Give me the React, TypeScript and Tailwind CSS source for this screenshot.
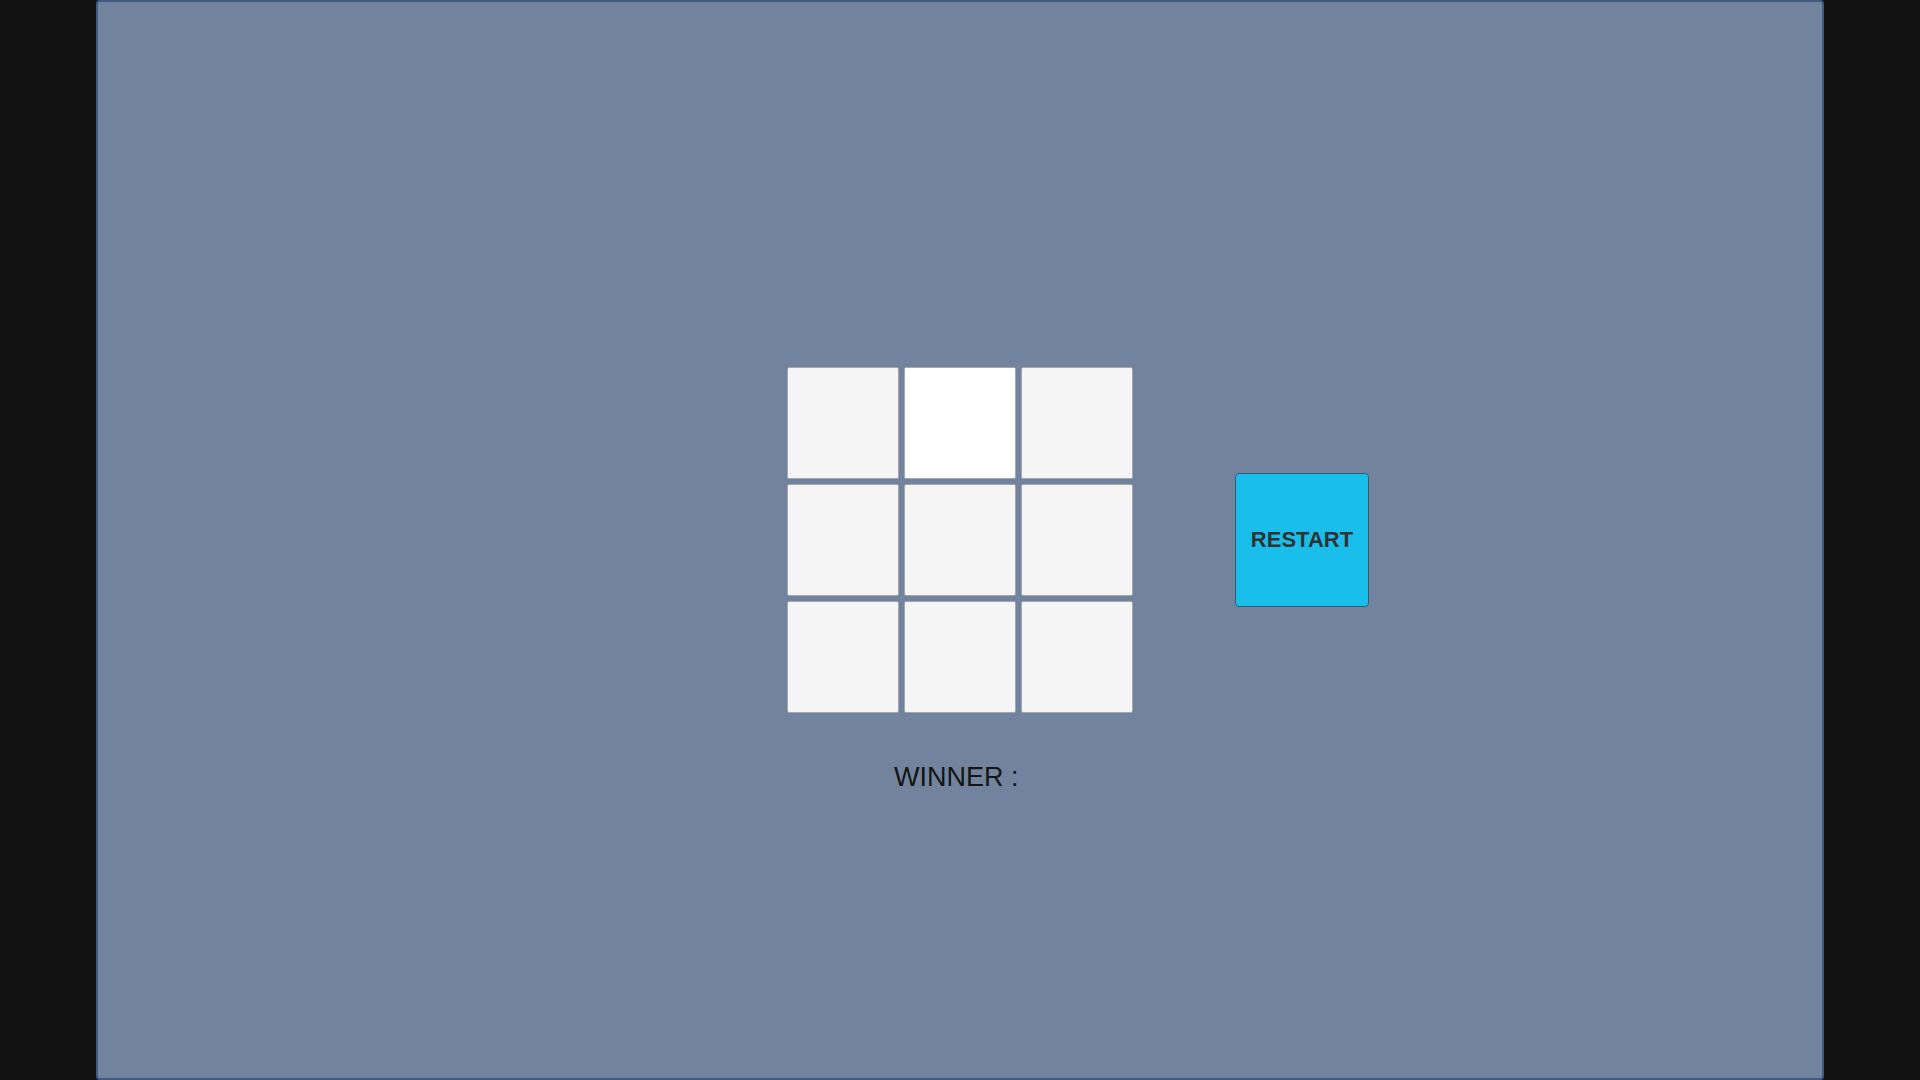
import { useState } from "react";

const LINES = [
  [0, 1, 2], [3, 4, 5], [6, 7, 8],
  [0, 3, 6], [1, 4, 7], [2, 5, 8],
  [0, 4, 8], [2, 4, 6],
];

type Mark = "X" | "O" | "";

const EMPTY: Mark[] = Array(9).fill("");

function findWinner(cells: Mark[]): Mark {
  const line = LINES.find(([a, b, c]) => cells[a] && cells[a] === cells[b] && cells[a] === cells[c]);
  return line ? cells[line[0]] : "";
}

function Cell({ mark, index, active, onPlay, onPoint }: {
  mark: Mark;
  index: number;
  active: boolean;
  onPlay: () => void;
  onPoint: () => void;
}) {
  return (
    <button
      type="button"
      aria-label={`Cell ${index + 1}`}
      onClick={onPlay}
      onMouseEnter={onPoint}
      onFocus={onPoint}
      className={`size-28 rounded-[2px] border border-[#a5a7ab] text-6xl text-[#323232] ${active ? "bg-white" : "bg-[#f5f5f5]"}`}
    >
      {mark}
    </button>
  );
}

export default function App() {
  const [cells, setCells] = useState<Mark[]>(EMPTY);
  const [active, setActive] = useState(1);
  const winner = findWinner(cells);

  const play = (i: number) => {
    if (cells[i] || winner) return;
    const next: Mark = cells.filter(Boolean).length % 2 ? "O" : "X";
    setCells(cells.map((c, j) => (j === i ? next : c)));
  };

  return (
    <div className="flex min-h-screen justify-center bg-[#111111] font-['Liberation_Sans',Arial,sans-serif]">
      <main className="grid w-9/10 grid-cols-[1fr_auto_1fr] grid-rows-[1fr_auto_1fr] items-center rounded-[4px] border-2 border-[#415a82] bg-[#72839d]">
        <div className="col-start-2 row-start-2 grid grid-cols-3 gap-[5px]">
          {cells.map((mark, i) => (
            <Cell
              key={i}
              mark={mark}
              index={i}
              active={i === active}
              onPlay={() => play(i)}
              onPoint={() => setActive(i)}
            />
          ))}
        </div>
        <button
          type="button"
          onClick={() => setCells(EMPTY)}
          className="col-start-3 row-start-2 ml-[102px] size-[134px] rounded-[4px] border border-[#2f5f74] bg-[#19bfea] pb-0.5 text-[22px] font-bold text-[#323232]"
        >
          RESTART
        </button>
        <p className="col-start-2 row-start-3 mt-12 self-start whitespace-pre text-center text-[27px] leading-8 text-[#151515]">
          {`WINNER : ${winner}`}
        </p>
      </main>
    </div>
  );
}
